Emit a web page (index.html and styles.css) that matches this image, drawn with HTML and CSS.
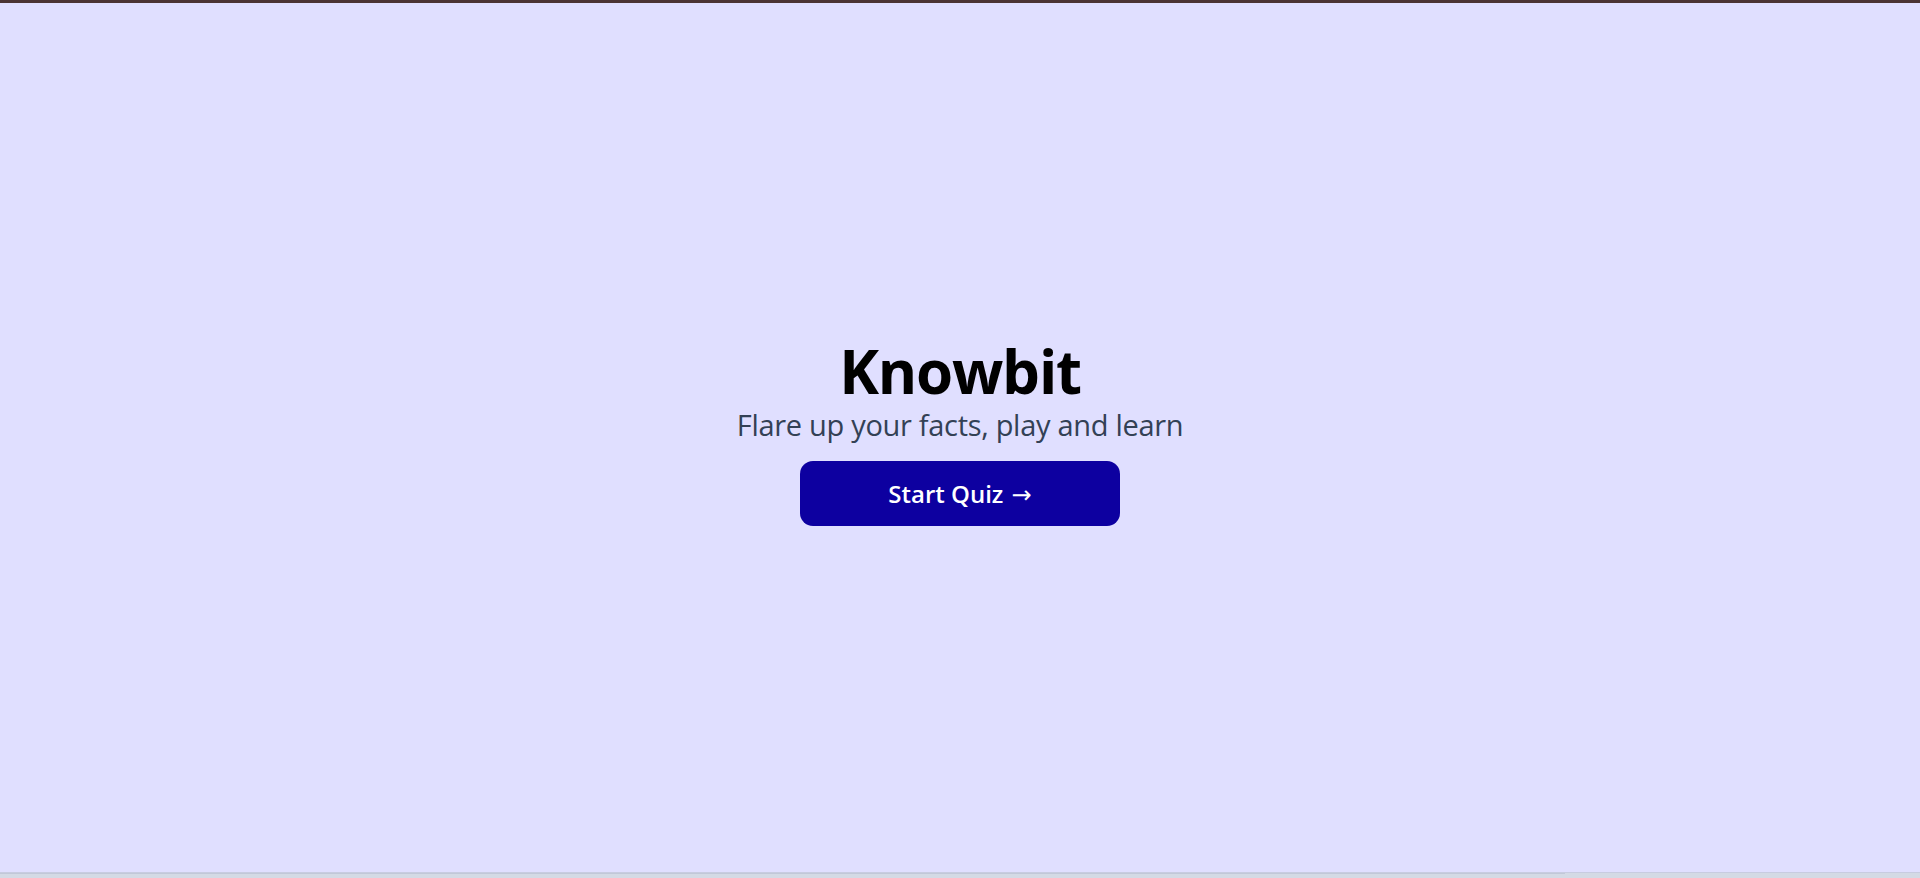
FILE: index.html
```html
<!DOCTYPE html>
<html lang="en">
<head>
<meta charset="utf-8">
<title>Knowbit</title>
<link rel="stylesheet" href="styles.css">
</head>
<body>
<div class="page">
  <div class="topbar"></div>
  <main class="hero">
    <h1 class="title">Knowbit</h1>
    <p class="subtitle">Flare up your facts, play and learn</p>
    <button class="start">Start Quiz <span class="arrow">→</span></button>
  </main>
  <div class="scrollbar"><div class="thumb"></div></div>
</div>
</body>
</html>
```
FILE: styles.css
```css
* { box-sizing: border-box; }
html, body { margin: 0; padding: 0; height: 100%; }
body {
  font-family: "Open Sans", "Noto Sans", sans-serif;
  background: #e0dfff;
  overflow: hidden;
}
.page {
  height: 100vh;
  display: flex;
  flex-direction: column;
}
.topbar {
  height: 3px;
  background: #4b3434;
  flex: none;
}
.hero {
  flex: 1;
  display: flex;
  flex-direction: column;
  align-items: center;
  justify-content: center;
  padding-bottom: 14px;
}
.title {
  margin: 0;
  font-size: 60px;
  font-weight: 700;
  line-height: 72px;
  color: #000;
  letter-spacing: -1.2px;
}
.subtitle {
  margin: 0 0 18px;
  font-size: 29px;
  line-height: 36px;
  color: #334155;
  letter-spacing: -0.3px;
}
.start {
  width: 320px;
  height: 65px;
  border: none;
  border-radius: 13px;
  background: #0d00a0;
  color: #fff;
  font-family: inherit;
  font-size: 24px;
  font-weight: 600;
  cursor: pointer;
}
.arrow {
  font-family: "DejaVu Sans", sans-serif;
  font-weight: 400;
  font-size: 24px;
  margin-left: 2px;
}
.scrollbar {
  flex: none;
  height: 6px;
  background: #d4dae5;
  border-top: 1px solid #c8cce0;
}
.thumb {
  width: 1565px;
  height: 1px;
  background: #c2c8d8;
}
```
